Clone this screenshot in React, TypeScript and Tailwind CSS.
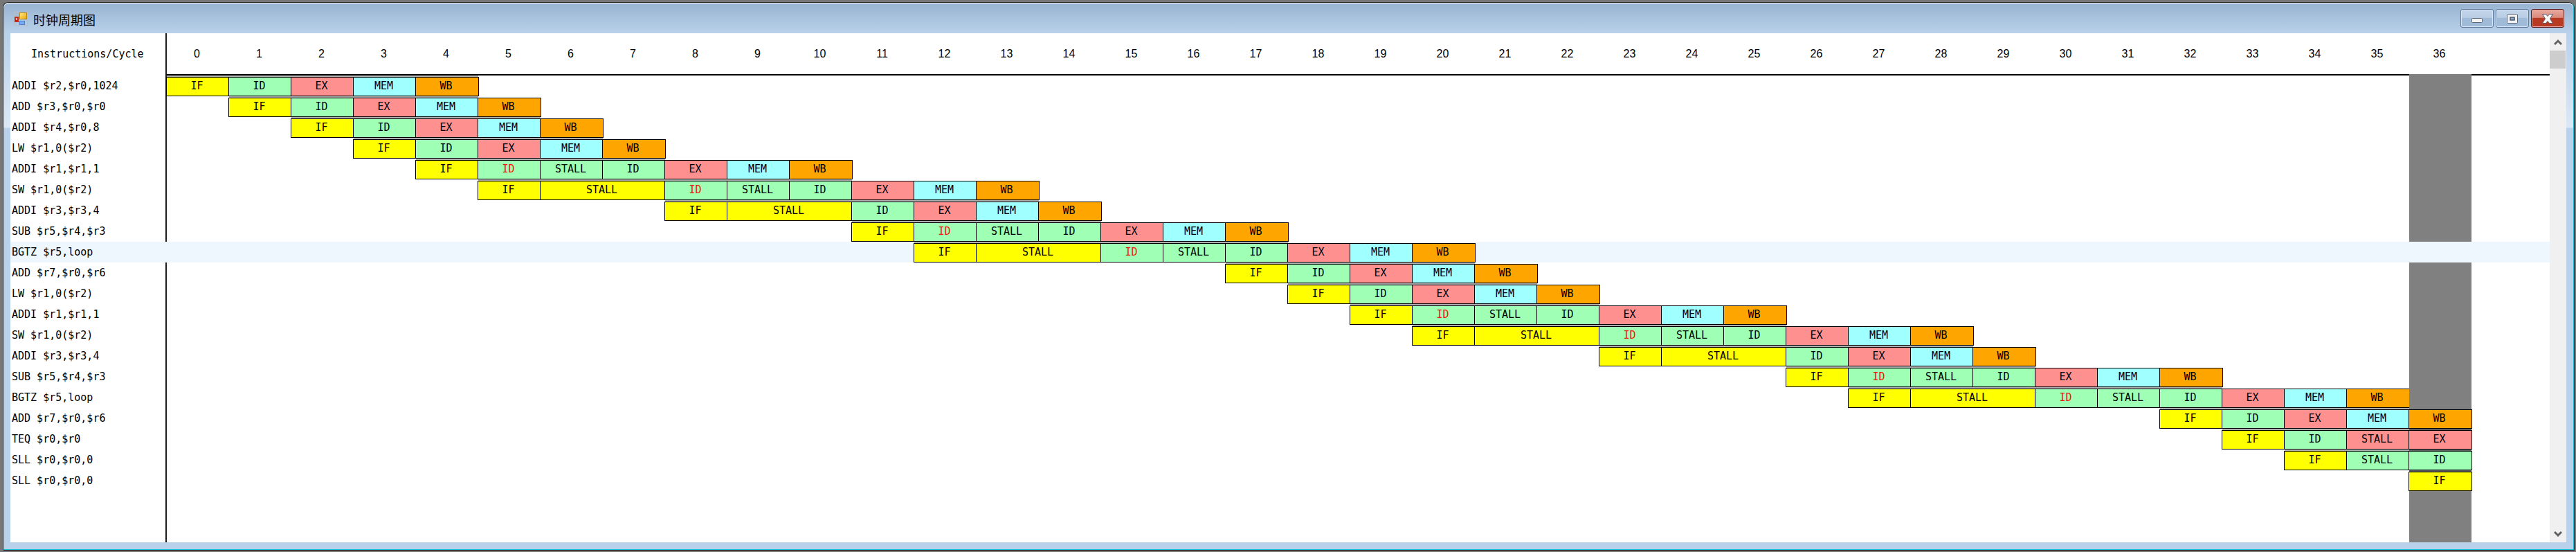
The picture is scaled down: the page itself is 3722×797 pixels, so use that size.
const STAGE = {
  IF: 'bg-[#ffff00]',
  ID: 'bg-[#9fffb4]',
  EX: 'bg-[#ff9090]',
  MEM: 'bg-[#a0ffff]',
  WB: 'bg-[#ffa500]',
};

type Stage = keyof typeof STAGE;
type Cell = { text: string; stage: Stage; span?: number; hazard?: boolean };
type Row = { code: string; start: number; cells: Cell[]; active?: boolean };

const IF: Cell = { text: 'IF', stage: 'IF' };
const ID: Cell = { text: 'ID', stage: 'ID' };
const EX: Cell = { text: 'EX', stage: 'EX' };
const MEM: Cell = { text: 'MEM', stage: 'MEM' };
const WB: Cell = { text: 'WB', stage: 'WB' };
const HZ: Cell = { text: 'ID', stage: 'ID', hazard: true };
const IF_STALL: Cell = { text: 'STALL', stage: 'IF', span: 2 };
const ID_STALL: Cell = { text: 'STALL', stage: 'ID' };
const EX_STALL: Cell = { text: 'STALL', stage: 'EX' };

const plain = [IF, ID, EX, MEM, WB];
const dataHazard = [IF, HZ, ID_STALL, ID, EX, MEM, WB];
const doubleHazard = [IF, IF_STALL, HZ, ID_STALL, ID, EX, MEM, WB];
const fetchStall = [IF, IF_STALL, ID, EX, MEM, WB];

const rows: Row[] = [
  { code: 'ADDI $r2,$r0,1024', start: 0, cells: plain },
  { code: 'ADD $r3,$r0,$r0', start: 1, cells: plain },
  { code: 'ADDI $r4,$r0,8', start: 2, cells: plain },
  { code: 'LW $r1,0($r2)', start: 3, cells: plain },
  { code: 'ADDI $r1,$r1,1', start: 4, cells: dataHazard },
  { code: 'SW $r1,0($r2)', start: 5, cells: doubleHazard },
  { code: 'ADDI $r3,$r3,4', start: 8, cells: fetchStall },
  { code: 'SUB $r5,$r4,$r3', start: 11, cells: dataHazard },
  { code: 'BGTZ $r5,loop', start: 12, cells: doubleHazard, active: true },
  { code: 'ADD $r7,$r0,$r6', start: 17, cells: plain },
  { code: 'LW $r1,0($r2)', start: 18, cells: plain },
  { code: 'ADDI $r1,$r1,1', start: 19, cells: dataHazard },
  { code: 'SW $r1,0($r2)', start: 20, cells: doubleHazard },
  { code: 'ADDI $r3,$r3,4', start: 23, cells: fetchStall },
  { code: 'SUB $r5,$r4,$r3', start: 26, cells: dataHazard },
  { code: 'BGTZ $r5,loop', start: 27, cells: doubleHazard },
  { code: 'ADD $r7,$r0,$r6', start: 32, cells: plain },
  { code: 'TEQ $r0,$r0', start: 33, cells: [IF, ID, EX_STALL, EX] },
  { code: 'SLL $r0,$r0,0', start: 34, cells: [IF, ID_STALL, ID] },
  { code: 'SLL $r0,$r0,0', start: 36, cells: [IF] },
];

const CYCLES = 37;
const LAST = CYCLES - 1;
const cycles = Array.from({ length: CYCLES }, (_, i) => i);
const endOf = (r: Row) => r.start + r.cells.reduce((n, c) => n + (c.span ?? 1), 0);

function TimelineRow({ row, prevEnd }: { row: Row; prevEnd: number }) {
  const end = endOf(row);
  let at = row.start;
  return (
    <tr className={row.active ? 'h-[30px] bg-[#eef6fe]' : 'h-[30px]'}>
      <th
        scope="row"
        className={`border-r-2 p-0 pl-[2px] text-left font-normal whitespace-nowrap ${row.active ? 'border-transparent' : 'border-[#1c1c1c]'}`}
      >
        {row.code}
      </th>
      {row.start > 0 && <td colSpan={row.start} />}
      {row.cells.map((c, i) => {
        const from = at;
        at += c.span ?? 1;
        const gap = from < prevEnd ? (from === LAST ? 'bg-[#606060]' : 'bg-[#b0b0b0]') : '';
        return (
          <td key={i} colSpan={c.span ?? 1} className={`p-0 align-top ${from === LAST && !row.active ? 'bg-[#808080]' : ''}`}>
            <div className={`h-[2px] ${gap}`} />
            <div
              className={`-mr-px -ml-px h-7 border border-black pr-[3px] text-center leading-[25px] ${STAGE[c.stage]} ${c.hazard ? 'text-[#f01800]' : 'text-black'}`}
            >
              {c.text}
            </div>
          </td>
        );
      })}
      {end < LAST && <td colSpan={LAST - end} />}
      {end <= LAST && <td className={row.active ? '' : 'bg-[#808080]'} />}
      <td />
    </tr>
  );
}

function AppIcon() {
  return (
    <svg width="20" height="20" viewBox="0 0 20 20" aria-hidden="true">
      <defs>
        <linearGradient id="gold" x1="0" y1="0" x2="1" y2="1">
          <stop offset="0" stopColor="#ffe98c" />
          <stop offset="1" stopColor="#e9a800" />
        </linearGradient>
      </defs>
      <rect x=".5" y=".5" width="19" height="19" fill="none" stroke="#b9bfc6" />
      <rect x="8.5" y="1.500" width="10" height="9" fill="url(#gold)" stroke="#b8860b" />
      <rect x="1" y="7" width="6" height="8" fill="#c22a1c" />
      <rect x="3" y="9" width="2" height="3" fill="#f5b0a0" />
      <rect x="8.500" y="13.500" width="7" height="5" fill="#78aaf5" stroke="#4c7fd8" />
    </svg>
  );
}

const frameBtn =
  'flex h-[27px] w-12 items-center justify-center rounded-[3px] border border-[#5f7a9c] bg-linear-to-b from-[#c3d5e9] from-0% via-[#b9cee5] via-45% to-[#a0bbd8] to-50% shadow-[inset_0_0_0_1px_#d6e4f3]';

export default function App() {
  return (
    <div className="flex h-screen flex-col bg-[#777777] pt-[3px] pr-[3px] pb-[3px] pl-1 font-['DejaVu_Sans_Mono','Noto_Sans_CJK_SC',monospace] text-[15px] text-black">
      <main className="flex min-h-0 flex-1 flex-col rounded-t-lg border border-[#222222] border-r-[#18b8d0] border-b-[#18b8d0] bg-[linear-gradient(#b9d1ea_46px,#dce8f5_180px,#b9d1ea_181px)] pr-[10px] pb-[10px] pl-[10px] shadow-[1px_1px_0_#222222]">
        <header className="-mx-[10px] flex h-11 shrink-0 items-center rounded-t-lg border-t border-white bg-linear-to-b from-[#99b4d1] to-[#b9d1ea] pr-[13px] pl-[15px]">
          <AppIcon />
          <h1 className="ml-2 flex-1 pt-[2px] font-['Noto_Sans_CJK_SC',sans-serif] text-[18px] leading-6">时钟周期图</h1>
          <div className="flex gap-[3px]">
            <button aria-label="Minimize" className={frameBtn}>
              <svg width="18" height="18" viewBox="0 0 18 18">
                <rect x="1.500" y="8.500" width="15" height="6" rx="1" fill="#f4f4f4" stroke="#5b6679" />
              </svg>
            </button>
            <button aria-label="Maximize" className={frameBtn}>
              <svg width="18" height="18" viewBox="0 0 18 18">
                <rect x="1.500" y="2.500" width="15" height="13" rx="1" fill="#f4f4f4" stroke="#5b6679" />
                <rect x="6" y="7" width="6" height="4" fill="#8fadcf" stroke="#4b5669" strokeWidth="1.500" />
              </svg>
            </button>
            <button
              aria-label="Close"
              className="flex h-[27px] w-12 items-center justify-center rounded-[3px] border border-[#5b1a20] bg-linear-to-b from-[#e9a99f] from-0% via-[#d98a7c] via-45% to-[#b83a22] to-50% shadow-[inset_0_0_0_1px_#e6a79c]"
            >
              <svg width="18" height="18" viewBox="0 0 18 18">
                <path d="M1.500 2.500h5L9 5.500l2.500-3h5L12.500 9l4 6.500h-5L9 12.500l-2.500 3h-5l4-6.500z" fill="#f8f8f8" stroke="#5b5a6a" />
              </svg>
            </button>
          </div>
        </header>

        <section className="flex min-h-0 flex-1 bg-white">
          <div className="flex min-w-0 flex-1 flex-col overflow-hidden">
            <table className="h-full w-full table-fixed border-separate border-spacing-0">
              <colgroup>
                <col className="w-[226px]" />
                {cycles.map((c) => (
                  <col key={c} className="w-[90px]" />
                ))}
                <col />
              </colgroup>
              <thead>
                <tr className="h-[61px]">
                  <th scope="col" className="border-r-2 border-[#1c1c1c] p-0 pl-[30px] text-left font-normal">
                    Instructions/Cycle
                  </th>
                  {cycles.map((c) => (
                    <th
                      key={c}
                      scope="col"
                      className={`border-b-2 p-0 pr-[3px] text-center font-['Liberation_Sans',sans-serif] text-[16px] font-normal ${c === LAST ? 'border-[#808080]' : 'border-black'}`}
                    >
                      {c}
                    </th>
                  ))}
                  <th className="border-b-2 border-black" />
                </tr>
              </thead>
              <tbody>
                {rows.map((r, i) => (
                  <TimelineRow key={i} row={r} prevEnd={i === 0 ? CYCLES : endOf(rows[i - 1])} />
                ))}
                <tr>
                  <td className="border-r-2 border-[#1c1c1c]" />
                  <td colSpan={LAST} />
                  <td className="bg-[#808080]" />
                  <td />
                </tr>
              </tbody>
            </table>
          </div>
          <div className="flex w-6 shrink-0 flex-col items-center bg-[#f0f0f0]">
            <button aria-label="Scroll up" className="flex h-[25px] w-full items-center justify-center">
              <svg width="12" height="10" viewBox="0 0 12 10">
                <path d="M1 8l5-5 5 5" fill="none" stroke="#606060" strokeWidth="3" />
              </svg>
            </button>
            <div className="mr-px h-[26px] w-[23px] bg-[#cdcdcd]" />
            <div className="flex-1" />
            <button aria-label="Scroll down" className="flex h-[25px] w-full items-center justify-center">
              <svg width="12" height="10" viewBox="0 0 12 10">
                <path d="M1 2l5 5 5-5" fill="none" stroke="#606060" strokeWidth="3" />
              </svg>
            </button>
          </div>
        </section>
      </main>
    </div>
  );
}
